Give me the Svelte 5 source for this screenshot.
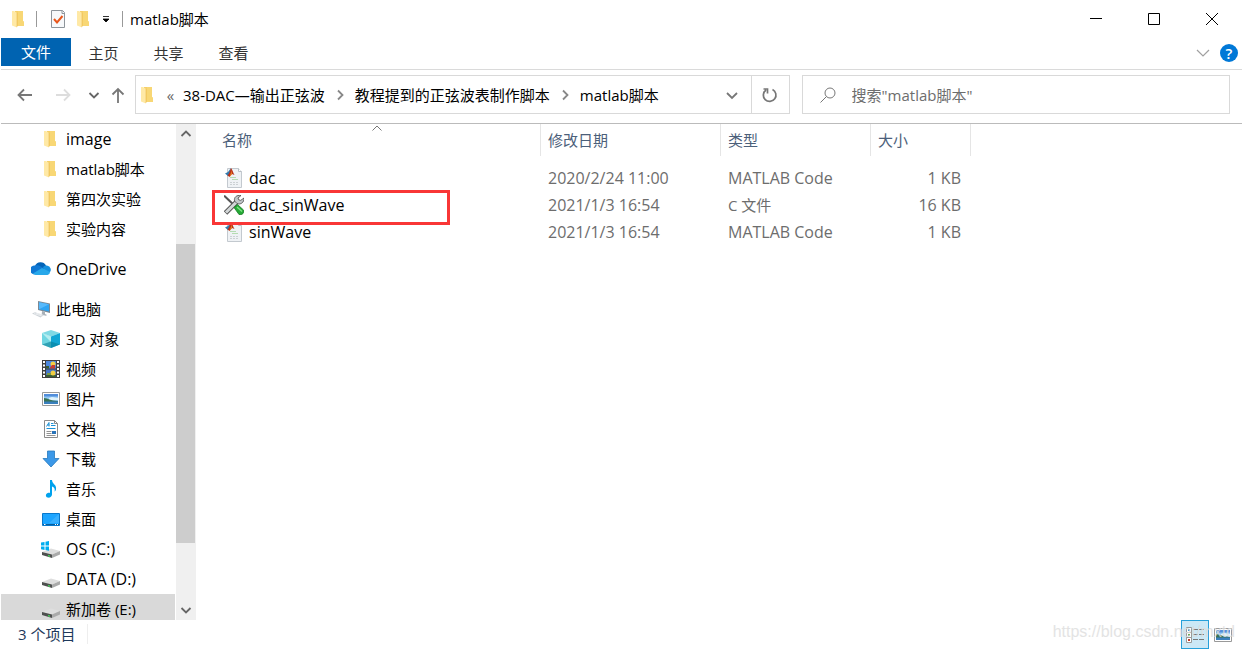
<script>
	const tabs = ['主页', '共享', '查看']
	const crumbs = ['38-DAC—输出正弦波', '教程提到的正弦波表制作脚本', 'matlab脚本']

	const places = [
		{ name: 'image', icon: 'folder', level: 2 },
		{ name: 'matlab脚本', icon: 'folder', level: 2 },
		{ name: '第四次实验', icon: 'folder', level: 2 },
		{ name: '实验内容', icon: 'folder', level: 2 },
		{ name: 'OneDrive', icon: 'cloud', level: 1 },
		{ name: '此电脑', icon: 'pc', level: 1 },
		{ name: '3D 对象', icon: 'cube', level: 2 },
		{ name: '视频', icon: 'film', level: 2 },
		{ name: '图片', icon: 'picture', level: 2 },
		{ name: '文档', icon: 'document', level: 2 },
		{ name: '下载', icon: 'download', level: 2 },
		{ name: '音乐', icon: 'music', level: 2 },
		{ name: '桌面', icon: 'desktop', level: 2 },
		{ name: 'OS (C:)', icon: 'osdrive', level: 2 },
		{ name: 'DATA (D:)', icon: 'drive', level: 2 },
		{ name: '新加卷 (E:)', icon: 'drive', level: 2 }
	]

	const files = [
		{ name: 'dac', icon: 'matlab', date: '2020/2/24 11:00', type: 'MATLAB Code', size: '1 KB' },
		{ name: 'dac_sinWave', icon: 'tools', date: '2021/1/3 16:54', type: 'C 文件', size: '16 KB', marked: true },
		{ name: 'sinWave', icon: 'matlab', date: '2021/1/3 16:54', type: 'MATLAB Code', size: '1 KB' }
	]

	let current = $state('新加卷 (E:)')
	let query = $state('')
	let view = $state('details')

	// the latin face is a little small next to the chinese one
	function isLatin(text) {
		return /^[\x00-\x7f]+$/.test(text)
	}
</script>

<svelte:head>
	<title>matlab脚本</title>
</svelte:head>

{#snippet icon(kind)}
	<svg class="icon" viewBox="0 0 20 20" width="20" height="20" aria-hidden="true">
		{#if kind === 'folder'}
			<path d="M6 2h8v10.500h1V17H6z" fill="#f5cf68" />
			<path d="M9 2h5v10.500h1V17H9z" fill="#f8d775" />
			<path d="M3 2h2l3 2v14.500L3 16.500z" fill="#ffe9a6" />
			<path d="M8 4v14" stroke="#e9bd52" stroke-width=".6" />
		{:else if kind === 'cloud'}
			<path d="M4 7a6 6 0 0 1 11-.5l-3 5-8-4z" fill="#0364b8" />
			<path d="M4 6.500c2-.7 4-.2 5 .6l5 3L3 15.500A4.500 4.500 0 0 1 4 6.500z" fill="#0f78d4" />
			<path d="M12 8.500c1-1.700 3-2.300 4.500-1.800A4 4 0 0 1 19 13l-4 1z" fill="#1490df" />
			<path d="M2 14.500 11 9l8 4a3 3 0 0 1-2.500 3H4.500A4 4 0 0 1 2 14.500z" fill="#28a8ea" />
		{:else if kind === 'pc'}
			<path d="M7 2 19 4.500V14L7 11z" fill="#7c8893" />
			<path d="M8 3.200 18 5.300v7.300L8 10.200z" fill="#2ea4f3" />
			<path d="M8 3.200 18 5.300 8 10.200z" fill="#57b9fb" />
			<path d="m11 12 3 .7v2.300l2 1-1 .8-5-1.300.8-.8z" fill="#a8b0b7" />
			<path d="m1 14.500 3-1.200 9 2.800-3.500 2.400z" fill="#cdd3d8" />
			<path d="m3 14.600 7.500 2.200M5 14l6.500 2" stroke="#fff" stroke-width=".6" />
		{:else if kind === 'cube'}
			<path d="M1 4 10 1l9 3-9 3.500z" fill="#80d9e4" />
			<path d="M1 4l9 3.500V19l-9-3.500z" fill="#6fd6e2" />
			<path d="M19 4 10 7.500V19l9-3.500z" fill="#12a6d4" />
			<path d="M1 4 10 7.500V13z" fill="#b5edf0" />
			<path d="M1 15.500 10 12.500l9 3L10 19z" fill="#077f98" opacity=".6" />
		{:else if kind === 'film'}
			<path d="M1 1h18v18H1z" fill="#3f3f3f" />
			<path d="M5 2h10v7.500H5z" fill="#4b87df" />
			<path d="M5 10.500h10V18H5z" fill="#4477c9" />
			<path d="M5 7h3v2.500H5zM5 16h10v2H5z" fill="#385c35" />
			<circle cx="12" cy="5" r="2.500" fill="#f3cf43" />
			<path d="M9 8.500 11 6h3v3.500H9z" fill="#c63d32" />
			<circle cx="12" cy="14" r="2.500" fill="#f3cf43" />
			<path d="M6 14h4v2H6z" fill="#7c9b43" />
			<path d="M3 2v16M17 2v16" stroke="#fff" stroke-width="2" stroke-dasharray="2 1.500" />
		{:else if kind === 'picture'}
			<path d="M1.500 3.500h17v13h-17z" fill="#fff" stroke="#999" />
			<path d="M3 5h14v10H3z" fill="#91c8f4" />
			<path d="M3 5h14v2.500H3z" fill="#528edb" />
			<path d="m8 9 3-1 6 1v2H8z" fill="#dff2fb" />
			<path d="M3 9c4 0 6 3 14 3v1H3z" fill="#397254" />
			<path d="M3 12.500h14V15H3z" fill="#397fbd" />
		{:else if kind === 'document'}
			<path d="M3.500 1.500h10l3 3v14h-13z" fill="#fff" stroke="#8b8b8b" />
			<path d="M13.500 1.500v3h3" fill="none" stroke="#8b8b8b" />
			<path d="m5.500 7.500 2.500-4v4M6.500 6h2M10 4.500h2.500M10 6.500h4.500M5.500 9.500h9" stroke="#1b91d6" fill="none" />
			<path d="M5.500 12.500h5M5.500 14.500h5M5.500 16.500h9" stroke="#929292" />
			<path d="M11 12h4v3h-4z" fill="#2973b9" />
		{:else if kind === 'download'}
			<path d="M6.500 2h7v7.500h4.500l-8 8.500-8-8.500h4.500z" fill="#3b98e8" stroke="#2678bd" stroke-width=".8" />
		{:else if kind === 'music'}
			<path d="M9 1h2c0 4 5 4.500 4 9.500-.3 1-1 2-1.500 2 1-3-1-4.700-2.500-5v8c0 2.500-2.500 3.500-4.500 3s-2.300-3.500.2-4.500c1-.4 1.800-.2 2.300 0z" fill="#00a2ed" />
		{:else if kind === 'desktop'}
			<path d="M1.500 4.500h17v12h-17z" fill="#1da5ff" stroke="#0878cc" />
			<path d="M18 5v9L8 14z" fill="#4cb8ff" opacity=".6" />
			<path d="M2 15.500h16" stroke="#075d9b" />
			<path d="M3 15.500h1.500M14 15.500h1M16 15.500h1" stroke="#fff" />
		{:else if kind === 'drive' || kind === 'osdrive'}
			<path d="m1 13 9-3.500L19 12l-8 3.500z" fill="#dedede" />
			<path d="m1 13 10 2.500V19L1 16z" fill="#4e504f" />
			<path d="m19 12-8 3.500V19l8-3.500z" fill="#aaa" />
			<path d="m7 16 2 .6v1.200l-2-.6z" fill="#43e05b" />
			{#if kind === 'osdrive'}
				<path d="m0 3.500 3.500-.6v3.600H0zM4.500 2.700 8 2v4.500H4.500zM0 7.500h3.500v3.400L0 10.300zM4.500 7.500H8v4.300l-3.500-.7z" fill="#00adef" />
			{/if}
		{:else if kind === 'matlab'}
			<path d="M3.500.5h11l3 3v16h-14z" fill="#eff2f5" stroke="#c3c9cf" />
			<path d="M14.500.5v3h3" fill="#fff" stroke="#b8bfc5" />
			<path d="M6 9.500h6M8 11.500h6" stroke="#b5dcb2" />
			<path d="M6 14.500h9M6 16.500h9" stroke="#ccd1d4" stroke-dasharray="2 1" />
			<path d="M1 5.500 4 4l3-4-1 6.500L4 8z" fill="#3179ad" />
			<path d="M7 0c1.500 1.500 2 5 3.500 7L8 6 5.500 9 3.500 7.500 5 5.500z" fill="#b93117" />
			<path d="M7 0c.6 2 .5 4-1.500 9L8 6z" fill="#ed8b28" />
		{:else if kind === 'tools'}
			<path d="m0 .5 12 11.500" stroke="#555" stroke-width="2" />
			<path d="M1.500 18 13 6.500" stroke="#555" stroke-width="5" />
			<path d="M2 17.500 13 6.500" stroke="#d3d7d8" stroke-width="3" />
			<path d="M10.500 6c-.6-4 2-6 6.500-5.500l-3 2.500.7 1.800 2 .6L20 3c.3 4.500-3.500 7-7 5.500z" fill="#c2c8ca" stroke="#555" stroke-width=".9" />
			<path d="m10 12.500 3.500-3 6 5.500c1.500 2.500-1.500 5.500-4.500 4.500z" fill="#25a936" stroke="#187b25" stroke-width=".8" />
			<path d="m13 12 5 4.500" stroke="#7de382" stroke-width="1.400" />
		{/if}
	</svg>
{/snippet}

{#snippet chevron(direction)}
	<svg class="chevron {direction}" viewBox="0 0 12 12" width="12" height="12" aria-hidden="true">
		<path d="m1.500 4 4.500 4.500L10.500 4" />
	</svg>
{/snippet}

<div class="window">
	<header class="titlebar">
		{@render icon('folder')}
		<span class="bar"></span>
		<div class="quick">
			<button aria-label="属性">
				<svg viewBox="0 0 16 20" width="16" height="20">
					<path d="M1.500 1.500h11l2 2v15h-13z" fill="#f7f9fb" stroke="#8e959b" />
					<path d="M12 1.500v3h3" fill="none" stroke="#8e959b" />
					<path d="m4 10 3 3.500L12.500 7" fill="none" stroke="#e8571c" stroke-width="2" />
				</svg>
			</button>
			<button aria-label="新建文件夹">{@render icon('folder')}</button>
			<button class="more" aria-label="自定义快速访问工具栏">
				<svg viewBox="0 0 8 8" width="8" height="8">
					<path d="M1 1.500h6M1 4l3 3 3-3z" fill="#000" stroke="#000" stroke-width=".8" />
				</svg>
			</button>
		</div>
		<span class="bar"></span>
		<h1>matlab脚本</h1>
		<div class="controls">
			<button aria-label="最小化"><svg viewBox="0 0 12 12" width="12" height="12"><path d="M0 5.500h12" /></svg></button>
			<button aria-label="最大化"><svg viewBox="0 0 12 12" width="12" height="12"><path d="M.5.5h11v11H.5z" /></svg></button>
			<button aria-label="关闭"><svg viewBox="0 0 12 12" width="12" height="12"><path d="m0 0 12 12M12 0 0 12" /></svg></button>
		</div>
	</header>

	<div class="ribbon">
		<button class="tab file">文件</button>
		{#each tabs as tab}
			<button class="tab">{tab}</button>
		{/each}
		<div class="help">
			<button aria-label="展开功能区">
				<svg viewBox="0 0 14 14" width="14" height="14"><path d="m1 4 6 6 6-6" fill="none" stroke="#a0a0a0" stroke-width="1.200" /></svg>
			</button>
			<button class="question" aria-label="帮助">?</button>
		</div>
	</div>

	<div class="toolbar">
		<div class="history">
			<button class="wide" aria-label="后退">
				<svg viewBox="0 0 16 16" width="16" height="16"><path d="M15 8H1.500M7 2.500 1.500 8 7 13.500" fill="none" stroke="#777" stroke-width="1.800" /></svg>
			</button>
			<button class="wide" aria-label="前进" disabled>
				<svg viewBox="0 0 16 16" width="16" height="16"><path d="M1 8h13.500M9 2.500 14.500 8 9 13.500" fill="none" stroke="#ddd" stroke-width="1.800" /></svg>
			</button>
			<button aria-label="最近浏览的位置">{@render chevron('down')}</button>
			<button aria-label="上移">
				<svg viewBox="0 0 16 16" width="16" height="16"><path d="M8 16V2M2.500 7.500 8 2l5.500 5.500" fill="none" stroke="#777" stroke-width="1.800" /></svg>
			</button>
		</div>
		<div class="address">
			{@render icon('folder')}
			<span class="laquo">«</span>
			<nav class="crumbs" aria-label="路径">
				{#each crumbs as crumb, i}
					{#if i > 0}
						{@render chevron('right')}
					{/if}
					<a href="#top">{crumb}</a>
				{/each}
			</nav>
			<button class="drop" aria-label="以前的位置">
				<svg viewBox="0 0 14 14" width="14" height="14"><path d="m2 5 5 5 5-5" fill="none" stroke="#777" stroke-width="1.800" /></svg>
			</button>
			<button class="refresh" aria-label="刷新">
				<svg viewBox="0 0 16 16" width="16" height="16"><path d="M10.500 2.500A6.300 6.300 0 1 1 4 3M1.500 2h4v4.500" fill="none" stroke="#777" stroke-width="1.700" /></svg>
			</button>
		</div>
		<label class="search">
			<svg viewBox="0 0 16 16" width="16" height="16" aria-hidden="true"><circle cx="10" cy="6" r="5" /><path d="M6.500 9.500.5 15.500" /></svg>
			<input type="text" aria-label="搜索" placeholder={'搜索"matlab脚本"'} bind:value={query} />
		</label>
	</div>

	<main>
		<nav class="tree" aria-label="导航窗格">
			<ul>
				{#each places as place}
					<li class:root={place.level === 1}>
						<button class:latin={isLatin(place.name)} class:active={place.name === current} onclick={() => (current = place.name)}>
							{@render icon(place.icon)}
							<span>{place.name}</span>
						</button>
					</li>
				{/each}
			</ul>
		</nav>
		<div class="scrollbar">
			<button aria-label="向上滚动">{@render chevron('up')}</button>
			<div class="track"><div class="thumb"></div></div>
			<button aria-label="向下滚动">{@render chevron('down')}</button>
		</div>
		<div class="content">
			<table>
				<thead>
					<tr>
						<th class="name">名称
							<svg class="sort" viewBox="0 0 10 6" width="10" height="6" aria-hidden="true"><path d="m.5 5.500 4.500-4.500 4.500 4.500" fill="none" stroke="#777" /></svg>
						</th>
						<th class="date">修改日期</th>
						<th class="type">类型</th>
						<th class="size">大小</th>
					</tr>
				</thead>
				<tbody>
					{#each files as file}
						<tr>
							<td class="name">
								<div class="label">
									{@render icon(file.icon)}
									<span>{file.name}</span>
								</div>
								{#if file.marked}
									<div class="mark"></div>
								{/if}
							</td>
							<td>{file.date}</td>
							<td class:mixed={!isLatin(file.type)}>{file.type}</td>
							<td class="size">{file.size}</td>
						</tr>
					{/each}
				</tbody>
			</table>
		</div>
	</main>

	<footer>
		<span class="count">3 个项目</span>
		<div class="views">
			<button class:on={view === 'details'} aria-label="详细信息" onclick={() => (view = 'details')}>
				<svg viewBox="0 0 18 18" width="18" height="18">
					<path d="M.5 1.500h5v5h-5zM.5 6.500h5v5h-5zM.5 11.500h5v5h-5z" fill="#fff" stroke="#999" />
					<path d="M2 3h2v2H2z" fill="#3c8ac0" /><path d="M2 8h2v2H2z" fill="#6ba64c" /><path d="M2 13h2v2H2z" fill="#c43a26" />
					<path d="M7 3.500h5M13 3.500h5M7 8.500h5M13 8.500h5M7 13.500h5M13 13.500h5" stroke="#777" />
				</svg>
			</button>
			<button class:on={view === 'large'} aria-label="大图标" onclick={() => (view = 'large')}>
				{@render icon('picture')}
			</button>
		</div>
		<span class="watermark">https://blog.csdn.net/mxtd</span>
	</footer>
</div>

<style>
	:global(body) {
		background: #fff;
	}

	.window {
		display: flex;
		flex-direction: column;
		height: 100vh;
		padding: 0 1px;
		box-sizing: border-box;
		font-family: 'Open Sans', 'Noto Sans CJK SC', sans-serif;
		font-size: 15px;
		line-height: 20px;
		color: #000;
		overflow: hidden;
	}

	button {
		display: flex;
		align-items: center;
		justify-content: center;
		margin: 0;
		padding: 0;
		border: 0;
		background: none;
		font: inherit;
		color: inherit;
	}

	svg {
		display: block;
		flex: none;
	}

	.chevron path {
		fill: none;
		stroke: #666;
		stroke-width: 1.8;
	}

	.chevron.up {
		transform: rotate(180deg);
	}

	.chevron.right {
		transform: rotate(-90deg);
	}

	.titlebar {
		display: flex;
		align-items: center;
		flex: none;
		height: 38px;
		gap: 7px;
		padding-left: 8px;
	}

	.bar {
		width: 1px;
		height: 16px;
		background: #999;
	}

	.quick {
		display: flex;
		padding-left: 1px;
	}

	.quick button {
		width: 26px;
		height: 24px;
	}

	.quick .more {
		width: 18px;
	}

	h1 {
		margin: 0;
		font-size: 15px;
		font-weight: 400;
	}

	.controls {
		display: flex;
		align-self: stretch;
		margin-left: auto;
		padding-right: 1px;
	}

	.controls button {
		width: 58px;
	}

	.controls path {
		fill: none;
		stroke: #000;
	}

	.ribbon {
		display: flex;
		flex: none;
		height: 31px;
		border-bottom: 1px solid #dadada;
		color: #333;
	}

	.tab {
		width: 65px;
		height: 30px;
	}

	.tab.file {
		width: 70px;
		height: 28px;
		background: #0063b1;
		color: #fff;
	}

	.help {
		display: flex;
		align-items: center;
		gap: 10px;
		height: 30px;
		margin-left: auto;
		padding-right: 4px;
	}

	.question {
		width: 18px;
		height: 18px;
		border-radius: 50%;
		background: #0078d7;
		color: #fff;
		font-weight: 600;
	}

	.toolbar {
		display: flex;
		flex: none;
		gap: 12px;
		padding: 5px 12px 9px 5px;
		border-bottom: 1px solid #bbb;
	}

	.history {
		display: flex;
		margin-right: -7px;
	}

	.history button {
		width: 24px;
	}

	.history .wide {
		width: 38px;
	}

	.address,
	.search {
		display: flex;
		align-items: center;
		box-sizing: border-box;
		height: 39px;
		border: 1px solid #d9d9d9;
	}

	.address {
		flex: 1;
		min-width: 0;
		padding-left: 2px;
	}

	.laquo {
		width: 25px;
		text-align: center;
		color: #666;
	}

	.crumbs {
		display: flex;
		flex: 1;
		align-items: center;
		gap: 9px;
		white-space: nowrap;
	}

	.crumbs a {
		color: #000;
		text-decoration: none;
	}

	.crumbs .chevron path {
		stroke: #888;
	}

	.drop,
	.refresh {
		width: 38px;
		align-self: stretch;
	}

	.refresh {
		border-left: 1px solid #d9d9d9;
	}

	.search {
		flex: 0 0 35%;
		padding-left: 17px;
		gap: 16px;
	}

	.search svg {
		fill: none;
		stroke: #777;
	}

	.search input {
		flex: 1;
		min-width: 0;
		padding: 0;
		border: 0;
		outline: 0;
		background: none;
		font: inherit;
	}

	.search input::placeholder {
		color: #6d6d6d;
		opacity: 1;
	}

	main {
		display: flex;
		flex: 1;
		min-height: 0;
	}

	.tree {
		width: 175px;
		flex: none;
		overflow: hidden;
	}

	ul {
		margin: 0;
		padding: 0;
		list-style: none;
	}

	li button {
		justify-content: flex-start;
		width: 174px;
		height: 30px;
		padding-left: 40px;
		gap: 5px;
		white-space: nowrap;
	}

	li.root {
		margin-top: 10px;
	}

	li.root:has(+ li.root) {
		margin-bottom: 10px;
	}

	li.root + li.root {
		margin-top: 0;
	}

	li.root button {
		padding-left: 30px;
	}

	li .active {
		background: #d9d9d9;
	}

	.latin {
		font-size: 16px;
	}

	.scrollbar {
		display: flex;
		flex-direction: column;
		flex: none;
		width: 20px;
		background: #f0f0f0;
	}

	.scrollbar button {
		height: 20px;
		padding-right: 1px;
	}

	.track {
		flex: 1;
		padding-top: 100px;
	}

	.thumb {
		width: 19px;
		height: 84%;
		background: #cdcdcd;
	}

	.content {
		flex: 1;
		min-width: 0;
		padding-left: 18px;
	}

	table {
		width: 757px;
		table-layout: fixed;
		border-collapse: separate;
		border-spacing: 0;
	}

	th {
		height: 32px;
		padding: 0 7px;
		box-sizing: border-box;
		border-right: 1px solid #e5e5e5;
		font-weight: 400;
		text-align: left;
		color: #4c607a;
	}

	th.name {
		position: relative;
		width: 327px;
		padding-left: 8px;
	}

	th.date {
		width: 180px;
	}

	th.type {
		width: 150px;
	}

	th.size {
		width: 100px;
	}

	.sort {
		position: absolute;
		top: 1px;
		left: 50%;
		margin-left: -5px;
	}

	tbody::before {
		content: '';
		display: block;
		height: 8px;
	}

	td {
		height: 27px;
		padding: 0 10px 0 7px;
		font-size: 16px;
		color: #6d6d6d;
		white-space: nowrap;
	}

	td.mixed {
		font-size: 15px;
	}

	td.name {
		position: relative;
		padding-left: 10px;
		color: #000;
	}

	td.size {
		text-align: right;
	}

	.label {
		display: flex;
		align-items: center;
		gap: 5px;
	}

	.mark {
		position: absolute;
		z-index: 1;
		top: -1px;
		left: -2px;
		width: 238px;
		height: 35px;
		box-sizing: border-box;
		border: 3px solid #f93636;
	}

	footer {
		position: relative;
		display: flex;
		flex: none;
		height: 30px;
		padding: 0 5px 0 17px;
		color: #1e395b;
	}

	.count {
		height: 20px;
		margin-top: 4px;
		padding-right: 12px;
		border-right: 1px solid #eee;
	}

	.views {
		display: flex;
		margin-left: auto;
	}

	.views button {
		width: 28px;
		height: 29px;
		box-sizing: border-box;
	}

	.views .on {
		border: 1px solid #26a0da;
		background: #cbe8f6;
	}

	.watermark {
		position: absolute;
		right: 7px;
		top: 2px;
		font-family: 'Liberation Sans', sans-serif;
		font-size: 16px;
		color: #ddd;
		opacity: .8;
		pointer-events: none;
	}
</style>
